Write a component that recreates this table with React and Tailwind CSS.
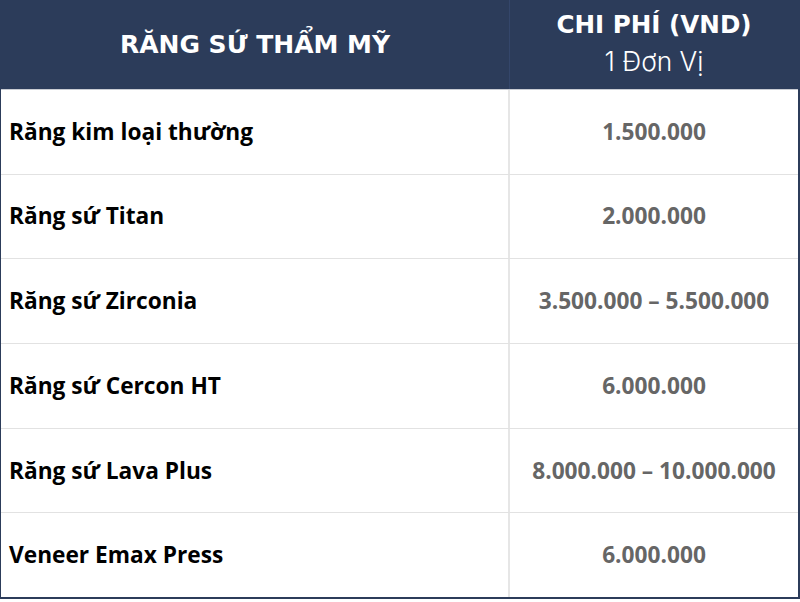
export default function App() {
  const rows = [
    ["Răng kim loại thường", "1.500.000"],
    ["Răng sứ Titan", "2.000.000"],
    ["Răng sứ Zirconia", "3.500.000 – 5.500.000"],
    ["Răng sứ Cercon HT", "6.000.000"],
    ["Răng sứ Lava Plus", "8.000.000 – 10.000.000"],
    ["Veneer Emax Press", "6.000.000"],
  ];
  return (
    <div className="w-[800px] h-[602px] bg-white">
      <div className="w-[800px] h-[599px] flex flex-col border-l border-r-2 border-b-2 border-[#2c3c5a]">
        <div className="h-[90px] shrink-0 flex bg-[#2c3c5a] border-b border-[#c9ccd3] text-white">
          <div className="w-[509px] flex items-center justify-center border-r border-[#34466a] text-[25px] font-bold font-['DejaVu_Sans',sans-serif]">
            RĂNG SỨ THẨM MỸ
          </div>
          <div className="flex-1 flex flex-col items-center justify-center leading-[37px] pb-[4px]">
            <div className="text-[24.6px] font-bold font-['DejaVu_Sans',sans-serif]">CHI PHÍ (VND)</div>
            <div className="text-[26.3px] font-light font-['Inter',sans-serif]">1 Đơn Vị</div>
          </div>
        </div>
        <div className="flex-1 flex flex-col font-['Open_Sans',sans-serif]">
          {rows.map(([name, price], i) => (
            <div key={i} className={"flex-1 flex " + (i < rows.length - 1 ? "border-b border-[#e2e2e2]" : "")}>
              <div className="w-[509px] flex items-center pl-[8px] border-r-2 border-[#e6e6e6] text-[22.7px] font-bold text-black">
                {name}
              </div>
              <div className="flex-1 flex items-center justify-center text-[22.7px] font-bold text-[#666666]">
                {price}
              </div>
            </div>
          ))}
        </div>
      </div>
    </div>
  );
}
